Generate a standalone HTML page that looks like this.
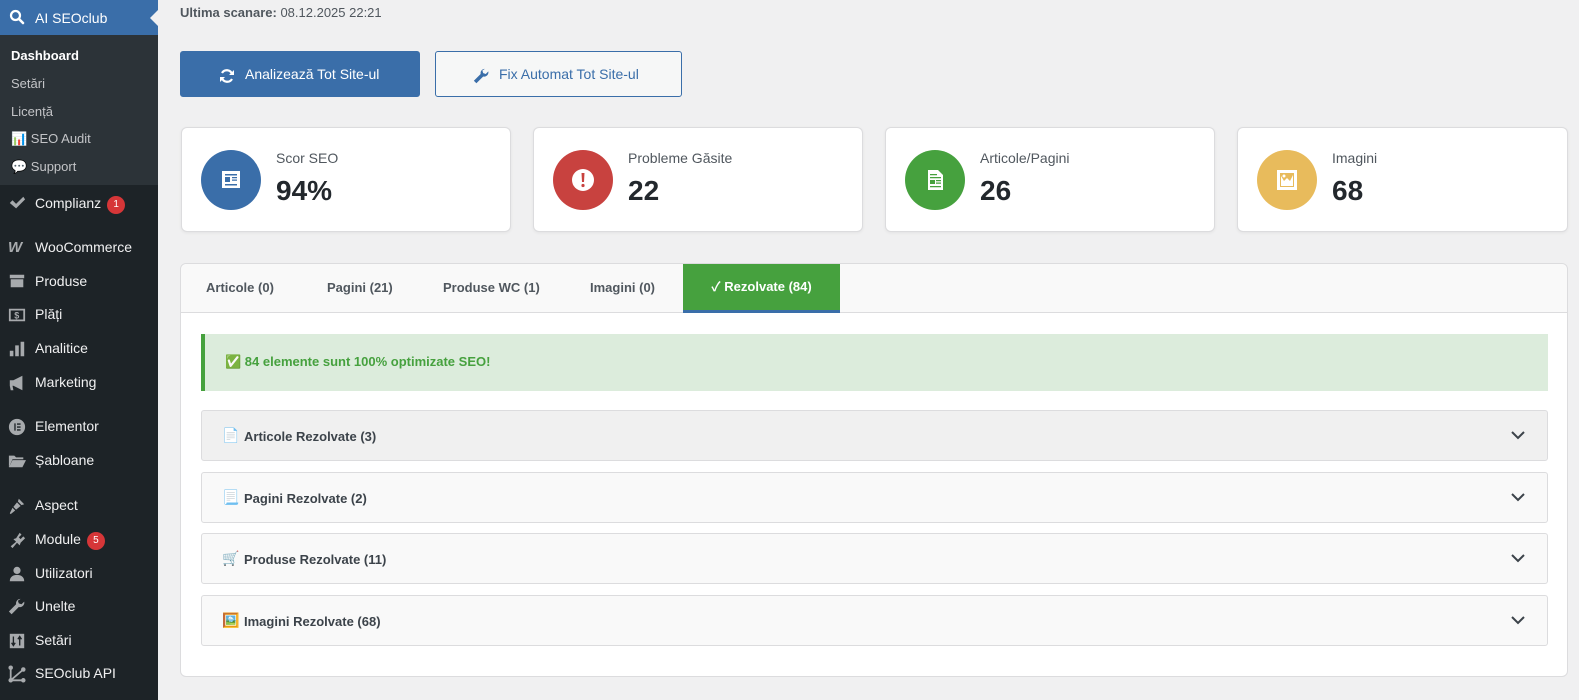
<!DOCTYPE html>
<html><head><meta charset="utf-8"><style>
*{box-sizing:border-box;margin:0;padding:0}
body{width:1579px;height:700px;overflow:hidden;background:#f0f0f1;font-family:"Liberation Sans","Noto Sans CJK SC",sans-serif;position:relative;color:#1d2327}
#sb{position:absolute;left:0;top:0;width:158px;height:700px;background:#1d2327}
.top{position:absolute;left:0;top:0;width:158px;height:35px;background:#3a6ea9;color:#fff;font-size:14px}
.top span{position:absolute;left:35px;top:10px}
.top:after{content:"";position:absolute;right:0;top:10px;border:8px solid transparent;border-right-color:#f0f0f1}
.sub{position:absolute;left:0;top:35px;width:158px;height:150px;background:#2c3338}
.sub div{position:absolute;left:11px;font-size:13px;color:#c3c4c7}
.mi{position:absolute;left:35px;font-size:14px;color:#f0f0f1}
.ic{position:absolute;left:8px;width:18px;height:18px;fill:#a7aaad}
.badge{display:inline-block;background:#d63638;color:#fff;border-radius:9px;font-size:10px;min-width:18px;height:18px;line-height:18px;text-align:center;margin-left:6px;vertical-align:1px}
.btn{position:absolute;top:51px;height:46px;border-radius:3px;font-size:14px;line-height:44px}
.card{position:absolute;top:127px;width:330px;height:105px;background:#fff;border:1px solid #dcdcde;border-radius:6px;box-shadow:0 1px 3px rgba(0,0,0,.06)}
.circ{position:absolute;left:19px;top:22px;width:60px;height:60px;border-radius:50%}
.circ svg{position:absolute;left:18px;top:18px;width:24px;height:24px}
.lbl{position:absolute;left:94px;top:22px;font-size:14px;color:#50575e}
.val{position:absolute;left:94px;top:47px;font-size:28px;font-weight:bold;color:#23282d}
#panel{position:absolute;left:180px;top:263px;width:1388px;height:414px;background:#fff;border:1px solid #dcdcde;border-radius:6px}
#tabs{position:absolute;left:0;top:0;width:100%;height:49px;background:#f9f9f9;border-bottom:1px solid #dcdcde;border-radius:6px 6px 0 0}
.tab{position:absolute;top:16px;font-size:13px;font-weight:bold;color:#50575e}
.notice{position:absolute;left:20px;top:70px;width:1347px;height:57px;background:#dcecdc;border-left:4px solid #46a13e;color:#46a13e;font-size:13px;font-weight:bold;padding:20px 0 0 20px}
.acc{position:absolute;left:20px;width:1347px;height:51px;background:#f9f9f9;border:1px solid #dcdcde;border-radius:3px;font-size:13px;font-weight:bold;color:#3c434a;padding:18px 0 0 42px}
.acc .e{position:absolute;left:20px;top:16px;font-size:14px}
.acc svg{position:absolute;right:22px;top:19px}
</style></head><body>
<div id="sb">
<div class="top"><svg style="position:absolute;left:9px;top:9px" width="16" height="16" viewBox="0 0 16 16"><circle cx="6.5" cy="6.5" r="4.5" stroke="#fff" stroke-width="2.2" fill="none"/><path d="M10 10l4 4" stroke="#fff" stroke-width="2.6" stroke-linecap="round"/></svg><span>AI SEOclub</span></div>
<div class="sub">
<div style="top:13px;color:#fff;font-weight:bold">Dashboard</div>
<div style="top:41px">Setări</div>
<div style="top:69px">Licență</div>
<div style="top:96px">📊 SEO Audit</div>
<div style="top:124px">💬 Support</div>
</div>
<svg class="ic" style="top:194px" viewBox="0 0 20 20"><path d="M2 10l3-3 4 4 8-8 2 3-10 10z"/></svg><div class="mi" style="top:195px">Complianz<span class="badge">1</span></div>
<div class="ic" style="top:239px;color:#a7aaad;font-weight:bold;font-style:italic;font-size:15px">W</div><div class="mi" style="top:239px">WooCommerce</div>
<svg class="ic" style="top:272px" viewBox="0 0 20 20"><path d="M2 3h16v4H2zM3 8h14v9H3z"/></svg><div class="mi" style="top:273px">Produse</div>
<svg class="ic" style="top:306px" viewBox="0 0 20 20"><path d="M1 3h18v14H1zM3 5v10h14V5z"/><text x="7" y="14" font-size="10" fill="#a7aaad" font-weight="bold">$</text></svg><div class="mi" style="top:306px">Plăți</div>
<svg class="ic" style="top:340px" viewBox="0 0 20 20"><path d="M2 12h4v6H2zM8 6h4v12H8zM14 2h4v16h-4z"/></svg><div class="mi" style="top:340px">Analitice</div>
<svg class="ic" style="top:374px" viewBox="0 0 20 20"><path d="M2 7h4l10-5v16L6 13H5l1 5H3l-1-5z"/></svg><div class="mi" style="top:374px">Marketing</div>
<svg class="ic" style="top:418px" viewBox="0 0 20 20"><circle cx="10" cy="10" r="9"/><path d="M7 6h1.5v8H7zM10 6h4v1.5h-4zM10 9.3h4v1.5h-4zM10 12.5h4V14h-4z" fill="#1d2327"/></svg><div class="mi" style="top:418px">Elementor</div>
<svg class="ic" style="top:452px" viewBox="0 0 20 20"><path d="M1 4h6l2 2h8v2H5l-4 9zM5 9h15l-4 8H1z"/></svg><div class="mi" style="top:452px">Șabloane</div>
<svg class="ic" style="top:497px" viewBox="0 0 20 20"><path d="M12 2l6 6-3 1-4-4zM10 6l4 4-5 4-3-3zM5 12l3 3-5 4-1-1z"/></svg><div class="mi" style="top:497px">Aspect</div>
<svg class="ic" style="top:531px" viewBox="0 0 20 20"><path d="M13 2l2 2-3 3 2 2 3-3 2 2-5 5-1 3-3-3-5 6-2-2 6-5-3-3 3-1z"/></svg><div class="mi" style="top:531px">Module<span class="badge">5</span></div>
<svg class="ic" style="top:565px" viewBox="0 0 20 20"><circle cx="10" cy="6" r="4"/><path d="M2 18c0-5 4-7 8-7s8 2 8 7z"/></svg><div class="mi" style="top:565px">Utilizatori</div>
<svg class="ic" style="top:598px" viewBox="0 0 20 20"><path d="M14 1a5 5 0 0 0-5 6L1 15l3 3 8-8a5 5 0 0 0 6-6l-3 3-3-1-1-3z"/></svg><div class="mi" style="top:598px">Unelte</div>
<svg class="ic" style="top:632px" viewBox="0 0 20 20"><path d="M2 2h16v16H2z"/><path d="M6 5v10M4 12l2 3 2-3M13 15V5M11 8l2-3 2 3" stroke="#1d2327" stroke-width="1.5" fill="none"/></svg><div class="mi" style="top:632px">Setări</div>
<svg class="ic" style="top:665px" viewBox="0 0 20 20"><circle cx="3" cy="3" r="2.5"/><circle cx="3" cy="17" r="2.5"/><circle cx="17" cy="17" r="2.5"/><circle cx="17" cy="5" r="2.5"/><path d="M3 3v14h14M3 17L17 5" stroke="#a7aaad" stroke-width="2" fill="none"/></svg><div class="mi" style="top:665px">SEOclub API</div>
</div>

<div style="position:absolute;left:180px;top:5px;font-size:13px;color:#50575e"><b>Ultima scanare:</b> 08.12.2025 22:21</div>
<div class="btn" style="left:180px;width:240px;background:#3a6ea9;color:#fff;border:1px solid #3a6ea9"><svg style="position:absolute;left:38px;top:16px" width="16" height="16" viewBox="0 0 16 16"><path d="M13 6A5.5 5.5 0 0 0 3 5M3 10a5.5 5.5 0 0 0 10 1" stroke="#fff" stroke-width="2.2" fill="none"/><path d="M15 2v5h-5zM1 14V9h5z" fill="#fff"/></svg><span style="position:absolute;left:64px">Analizează Tot Site-ul</span></div>
<div class="btn" style="left:435px;width:247px;background:#f6f7f7;color:#3a6ea9;border:1px solid #3a6ea9"><svg style="position:absolute;left:37px;top:16px" width="17" height="17" viewBox="0 0 20 20"><path d="M14 1a5 5 0 0 0-5 6L1 15l3 3 8-8a5 5 0 0 0 6-6l-3 3-3-1-1-3z" fill="#3a6ea9"/></svg><span style="position:absolute;left:63px">Fix Automat Tot Site-ul</span></div>

<div class="card" style="left:181px"><div class="circ" style="background:#3a6ea9"><svg viewBox="0 0 24 24"><path d="M3 3h18v17H3z" fill="#fff"/><path d="M6 6h12v1.5H6zM6 16h12v1.5H6zM6 9h5v5H6zM13 9h5v1.3h-5zM13 11.5h5v1.3h-5z" fill="#3a6ea9"/></svg></div><div class="lbl">Scor SEO</div><div class="val">94%</div></div>
<div class="card" style="left:533px"><div class="circ" style="background:#c8423f"><svg viewBox="0 0 24 24"><circle cx="12" cy="12" r="11" fill="#fff"/><path d="M10.5 5h3l-.5 9h-2z" fill="#c8423f"/><circle cx="12" cy="17.5" r="1.6" fill="#c8423f"/></svg></div><div class="lbl">Probleme Găsite</div><div class="val">22</div></div>
<div class="card" style="left:885px"><div class="circ" style="background:#46a13e"><svg viewBox="0 0 24 24"><path d="M5 2h10l5 5v15H5z" fill="#fff"/><path d="M7 6h7v1.2H7zM7 9h11v1.2H7zM7 12h5v4H7zM13 12h5v1.2h-5zM13 14.5h5v1.2h-5zM7 18h11v1.2H7z" fill="#46a13e"/></svg></div><div class="lbl">Articole/Pagini</div><div class="val">26</div></div>
<div class="card" style="left:1237px;width:331px"><div class="circ" style="background:#e8bb5c"><svg viewBox="0 0 24 24"><path d="M2 2h20v20H2z" fill="#fff"/><path d="M5 5h14v14H5z" fill="#e8bb5c"/><path d="M6 8l3 5 3-3 3 3 3-6v11H6z" fill="#fff"/><circle cx="9" cy="8" r="1.5" fill="#fff"/></svg></div><div class="lbl">Imagini</div><div class="val">68</div></div>

<div id="panel">
<div id="tabs">
<div class="tab" style="left:25px">Articole (0)</div>
<div class="tab" style="left:146px">Pagini (21)</div>
<div class="tab" style="left:262px">Produse WC (1)</div>
<div class="tab" style="left:409px">Imagini (0)</div>
<div style="position:absolute;left:502px;top:0;width:157px;height:49px;background:#46a13e;border-bottom:3px solid #3a6ea9;color:#fff;font-size:13px;font-weight:bold;text-align:center;line-height:46px">✓ Rezolvate (84)</div>
</div>
<div class="notice">✅ 84 elemente sunt 100% optimizate SEO!</div>
<div class="acc" style="top:146px;background:#f0f0f0"><span class="e">📄</span>Articole Rezolvate (3)<svg width="14" height="10" viewBox="0 0 14 10"><path d="M1 2l6 6 6-6" stroke="#3c434a" stroke-width="2" fill="none"/></svg></div>
<div class="acc" style="top:208px"><span class="e">📃</span>Pagini Rezolvate (2)<svg width="14" height="10" viewBox="0 0 14 10"><path d="M1 2l6 6 6-6" stroke="#3c434a" stroke-width="2" fill="none"/></svg></div>
<div class="acc" style="top:269px"><span class="e">🛒</span>Produse Rezolvate (11)<svg width="14" height="10" viewBox="0 0 14 10"><path d="M1 2l6 6 6-6" stroke="#3c434a" stroke-width="2" fill="none"/></svg></div>
<div class="acc" style="top:331px"><span class="e">🖼️</span>Imagini Rezolvate (68)<svg width="14" height="10" viewBox="0 0 14 10"><path d="M1 2l6 6 6-6" stroke="#3c434a" stroke-width="2" fill="none"/></svg></div>
</div>
</body></html>
